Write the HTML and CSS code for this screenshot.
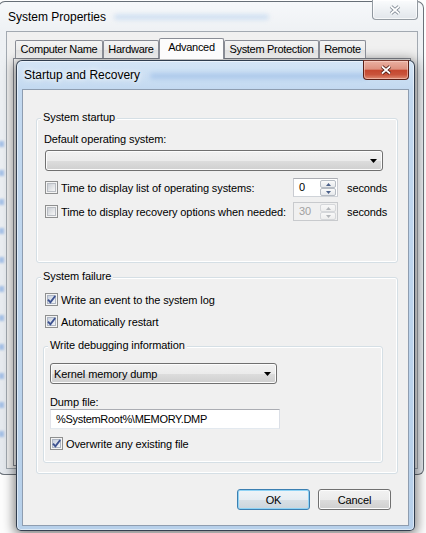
FILE: index.html
```html
<!DOCTYPE html>
<html lang="en">
<head>
<meta charset="utf-8">
<title>Startup and Recovery</title>
<link rel="stylesheet" href="styles.css">
</head>
<body>
<div class="desktop">
  <div class="window bgwin">
    <div class="frame-blur"></div>
    <div class="bg-titlebar">
      <span class="ghost ghost-bg"></span>
      <span class="wintitle">System Properties</span>
    </div>
    <div class="closebtn inactive">
      <svg width="12" height="10" viewBox="0 0 12 10"><path class="xo" d="M2 1.5L10 8.5M10 1.5L2 8.5"/><path class="xi" d="M2 1.5L10 8.5M10 1.5L2 8.5"/></svg>
    </div>
    <div class="bg-client">
      <div class="tabs">
        <div class="tab t-cn">Computer Name</div>
        <div class="tab t-hw">Hardware</div>
        <div class="tab t-adv sel">Advanced</div>
        <div class="tab t-sp">System Protection</div>
        <div class="tab t-rm">Remote</div>
      </div>
      <div class="tabpanel"></div>
    </div>
  </div>

  <div class="window dlg">
    <div class="dlg-titlebar">
      <span class="ghost ghost-dlg"></span>
      <span class="wintitle glow">Startup and Recovery</span>
    </div>
    <div class="closebtn active">
      <svg width="12" height="10" viewBox="0 0 12 10"><path class="xo" d="M2 1.5L10 8.5M10 1.5L2 8.5"/><path class="xi" d="M2 1.5L10 8.5M10 1.5L2 8.5"/></svg>
    </div>
    <div class="dlg-client">
      <section class="group g1">
        <div class="glabel">System startup</div>
        <div class="label">Default operating system:</div>
        <div class="combo wide">
          <span class="combo-text"></span>
          <svg class="arr" width="7" height="4" viewBox="0 0 7 4"><path d="M0 0H7L3.5 4Z"/></svg>
        </div>
        <div class="srow r1">
          <span class="chk"><span class="chk-in"></span></span>
          <span class="rtext">Time to display list of operating systems:</span>
          <div class="spin">
            <span class="spin-val">0</span>
            <div class="spin-btns">
              <span class="sb"><svg width="5" height="3" viewBox="0 0 5 3"><path d="M0 3L2.5 0L5 3Z"/></svg></span>
              <span class="sb"><svg width="5" height="3" viewBox="0 0 5 3"><path d="M0 0L2.5 3L5 0Z"/></svg></span>
            </div>
          </div>
          <span class="unit">seconds</span>
        </div>
        <div class="srow r2">
          <span class="chk"><span class="chk-in"></span></span>
          <span class="rtext">Time to display recovery options when needed:</span>
          <div class="spin disabled">
            <span class="spin-val">30</span>
            <div class="spin-btns">
              <span class="sb"><svg width="5" height="3" viewBox="0 0 5 3"><path d="M0 3L2.5 0L5 3Z"/></svg></span>
              <span class="sb"><svg width="5" height="3" viewBox="0 0 5 3"><path d="M0 0L2.5 3L5 0Z"/></svg></span>
            </div>
          </div>
          <span class="unit">seconds</span>
        </div>
      </section>

      <section class="group g2">
        <div class="glabel">System failure</div>
        <div class="crow c1">
          <span class="chk on"><span class="chk-in"></span><svg class="tick" width="13" height="13" viewBox="0 0 13 13"><path d="M3 6.6L5.4 9.3L10.2 3"/></svg></span>
          <span>Write an event to the system log</span>
        </div>
        <div class="crow c2">
          <span class="chk on"><span class="chk-in"></span><svg class="tick" width="13" height="13" viewBox="0 0 13 13"><path d="M3 6.6L5.4 9.3L10.2 3"/></svg></span>
          <span>Automatically restart</span>
        </div>

        <section class="group g3">
          <div class="glabel">Write debugging information</div>
          <div class="combo kcombo">
            <span class="combo-text">Kernel memory dump</span>
            <svg class="arr" width="7" height="4" viewBox="0 0 7 4"><path d="M0 0H7L3.5 4Z"/></svg>
          </div>
          <div class="dumplabel">Dump file:</div>
          <div class="textbox">%SystemRoot%\MEMORY.DMP</div>
          <div class="crow c3">
            <span class="chk on"><span class="chk-in"></span><svg class="tick" width="13" height="13" viewBox="0 0 13 13"><path d="M3 6.6L5.4 9.3L10.2 3"/></svg></span>
            <span>Overwrite any existing file</span>
          </div>
        </section>
      </section>

      <div class="buttons">
        <button class="btn ok" type="button">OK</button>
        <button class="btn" type="button">Cancel</button>
      </div>
    </div>
  </div>
</div>
</body>
</html>
```

FILE: styles.css
```css
* { box-sizing: border-box; }
html, body { margin: 0; padding: 0; }
body {
  width: 426px;
  height: 533px;
  overflow: hidden;
  background: #fff;
  font-family: "Liberation Sans", Arial, sans-serif;
  font-size: 11px;
  letter-spacing: -0.1px;
  color: #000;
}
.desktop {
  position: relative;
  width: 426px;
  height: 533px;
  overflow: hidden;
  background: #fdfdfd;
}
.window {
  position: absolute;
  display: flex;
  flex-direction: column;
}

/* ---------- background window ---------- */
.bgwin {
  left: -2px;
  top: 1px;
  width: 426px;
  height: 474px;
  padding: 0 5px 5px 7px;
  border: 1px solid rgba(50, 58, 68, 0.7);
  border-radius: 7px 7px 6px 6px;
  background: linear-gradient(#f6f8fa, #eef1f4 30px, #e5e9ee);
}
.frame-blur {
  position: absolute;
  left: 0;
  top: 122px;
  width: 5px;
  height: 330px;
  background: repeating-linear-gradient(to bottom, transparent 0 17px, rgba(100, 150, 220, 0.5) 17px 23px, transparent 23px 29px);
  filter: blur(1.2px);
}
.bg-titlebar {
  position: relative;
  height: 29px;
  display: flex;
  align-items: center;
  padding-left: 2px;
}
.wintitle {
  position: relative;
  font-size: 12px;
  line-height: 16px;
  letter-spacing: 0;
  color: #000;
}
.glow {
  text-shadow: 0 0 5px #fff, 0 0 9px rgba(255, 255, 255, 0.9);
}
.ghost {
  position: absolute;
  height: 6px;
  border-radius: 3px;
  filter: blur(2.2px);
}
.ghost-bg {
  left: 108px;
  top: 12px;
  width: 155px;
  background: rgba(120, 170, 230, 0.25);
}
.ghost-dlg {
  left: 128px;
  top: 12px;
  width: 218px;
  background: rgba(100, 150, 220, 0.28);
}
.closebtn {
  position: absolute;
  width: 46px;
  height: 20px;
  display: flex;
  align-items: center;
  justify-content: center;
  border-radius: 0 0 4px 4px;
}
.closebtn svg { fill: none; stroke-linecap: butt; }
.closebtn .xo { stroke-width: 3.6; }
.closebtn .xi { stroke: #fff; stroke-width: 1.7; }
.closebtn.inactive {
  right: 5px;
  top: -2px;
  border: 1px solid rgba(70, 80, 92, 0.55);
  border-top: none;
  background: linear-gradient(#fbfcfd, #eef1f4 50%, #e2e6eb);
  box-shadow: inset 0 0 0 1px rgba(255, 255, 255, 0.7);
}
.closebtn.inactive .xo { stroke: #7d8691; }
.closebtn.active {
  right: 5px;
  top: -1px;
  border: 1px solid #5a1f16;
  border-top-color: #7a3a30;
  background: linear-gradient(#eab0a2 0%, #de917f 45%, #c5472f 52%, #c9533b 75%, #de8a72 100%);
  box-shadow: inset 0 0 0 1px rgba(255, 220, 210, 0.5);
}
.closebtn.active .xo { stroke: #4a1810; }

.bg-client {
  flex: 1;
  display: flex;
  flex-direction: column;
  border: 1px solid #a2a9b1;
  background: #f0f0f0;
  padding: 6px 6px 2px 6px;
}
.tabs {
  position: relative;
  z-index: 1;
  display: flex;
  align-items: flex-end;
  height: 20px;
  padding-left: 2px;
}
.tab {
  flex: none;
  height: 18px;
  border: 1px solid #898c95;
  border-bottom: none;
  border-radius: 2px 2px 0 0;
  background: linear-gradient(#f4f4f4, #ececec 50%, #e0e0e0 51%, #e8e8e8);
  text-align: center;
  line-height: 17px;
  white-space: nowrap;
  letter-spacing: -0.3px;
}
.t-cn { width: 88px; }
.t-hw { width: 56px; }
.t-adv { width: 65px; }
.t-sp { width: 95px; }
.t-rm { width: 47px; }
.tab.sel {
  height: 21px;
  margin-bottom: -1px;
  background: #fcfcfc;
}
.tabpanel {
  flex: 1;
  border: 1px solid #898c95;
  background: #fcfcfc;
}

/* ---------- dialog ---------- */
.dlg {
  left: 16px;
  top: 60px;
  width: 399px;
  height: 471px;
  padding: 0 5px 4px 5px;
  border: 1px solid rgba(25, 35, 50, 0.85);
  border-radius: 6px 6px 5px 5px;
  background: linear-gradient(to bottom, #d4e5f6 0, #c3d9f0 28px, #b7d0ea 100%);
  box-shadow: inset 0 0 0 1px rgba(255, 255, 255, 0.5), 0 2px 12px 2px rgba(0, 0, 0, 0.5);
}
.dlg-titlebar {
  position: relative;
  height: 28px;
  display: flex;
  align-items: center;
  padding-left: 2px;
}
.dlg-client {
  flex: 1;
  display: flex;
  flex-direction: column;
  border: 1px solid #8e9db0;
  background: #f0f0f0;
  padding: 28px 10px 0 13px;
}

.group {
  display: flex;
  flex-direction: column;
  border: 1px solid #d5dfe5;
  border-radius: 3px;
  box-shadow: inset 0 0 0 1px #fff;
}
.glabel {
  position: relative;
  align-self: flex-start;
  margin: -9px 0 0 -4px;
  padding: 0 2px;
  background: #f0f0f0;
  line-height: 15px;
}
.g1 { padding: 0 14px 41px 8px; }
.label {
  margin: 7px 0 0 -1px;
  line-height: 15px;
}
.combo {
  display: flex;
  align-items: center;
  justify-content: space-between;
  height: 21px;
  border: 1px solid #707070;
  border-radius: 3px;
  background: linear-gradient(#f2f2f2 0%, #ebebeb 50%, #dddddd 51%, #cfcfcf 100%);
  box-shadow: inset 0 0 0 1px #fcfcfc;
  padding: 0 5px 0 3px;
}
.combo .arr { fill: #000; flex: none; }
.wide { margin-top: 3px; }

.srow {
  display: flex;
  align-items: center;
  height: 19px;
}
.r1 { margin-top: 7px; }
.r2 { margin-top: 5px; }
.rtext {
  flex: none;
  width: 232px;
  white-space: nowrap;
}
.unit {
  flex: none;
  margin-left: 9px;
  white-space: nowrap;
}

.chk {
  position: relative;
  flex: none;
  display: flex;
  width: 13px;
  height: 13px;
  margin-right: 3px;
  padding: 1px;
  border: 1px solid #8e8f8f;
  background: #f4f4f4;
}
.chk-in {
  flex: 1;
  border: 1px solid #b9bdc3;
  background: linear-gradient(135deg, #cbcfd5, #f6f6f6);
}
.chk.on .chk-in {
  border-color: #aeb6c4;
  background: linear-gradient(135deg, #c9d1df, #f3f5f8);
}
.tick {
  position: absolute;
  left: -1px;
  top: -1px;
  fill: none;
  stroke: #3d5290;
  stroke-width: 1.9;
}

.spin {
  flex: none;
  display: flex;
  align-items: stretch;
  width: 45px;
  height: 19px;
  border: 1px solid #abadb3;
  border-color: #abadb3 #c9cbd1 #cfd3d8 #c9cbd1;
  background: #fff;
}
.spin-val {
  flex: 1;
  padding-left: 5px;
  line-height: 17px;
}
.spin-btns {
  display: flex;
  flex-direction: column;
  width: 16px;
  margin: 1px 1px 0 0;
}
.sb {
  display: flex;
  align-items: center;
  justify-content: center;
  height: 8px;
  border: 1px solid #b6bcc4;
  border-radius: 2px;
  background: linear-gradient(#fbfbfb, #e6e8eb);
}
.sb svg { fill: #4b6089; }
.spin.disabled {
  background: #f0f0f0;
  border-color: #c8cacd;
}
.spin.disabled .spin-val { color: #a0a0a0; }
.spin.disabled .sb { border-color: #d5d7da; background: linear-gradient(#f8f8f8, #eeeeee); }
.spin.disabled .sb svg { fill: #b3b6ba; }

.g2 {
  margin-top: 14px;
  padding: 0 14px 10px 8px;
}
.crow {
  display: flex;
  align-items: center;
  height: 15px;
  white-space: nowrap;
}
.c1 { margin-top: 8px; }
.c2 { margin-top: 7px; }
.g3 {
  margin: 17px 0 0 -2px;
  padding: 0 0 11px 6px;
}
.g3 .glabel { margin-left: -2px; }
.kcombo {
  width: 227px;
  margin-top: 10px;
}
.dumplabel {
  margin-top: 11px;
  line-height: 14px;
}
.textbox {
  width: 230px;
  height: 20px;
  border: 1px solid;
  border-color: #abadb3 #dbdfe6 #e3e9ef #e2e3ea;
  background: #fff;
  padding-left: 5px;
  line-height: 18px;
  white-space: nowrap;
  letter-spacing: -0.3px;
}
.c3 { margin-top: 7px; }

.buttons {
  display: flex;
  justify-content: flex-end;
  gap: 8px;
  margin: 15px 7px 0 0;
}
.btn {
  width: 73px;
  height: 21px;
  padding: 0;
  border: 1px solid #707070;
  border-radius: 3px;
  background: linear-gradient(#f2f2f2 0%, #ebebeb 50%, #dddddd 51%, #cfcfcf 100%);
  box-shadow: inset 0 0 0 1px #fcfcfc;
  font-family: "Liberation Sans", Arial, sans-serif;
  font-size: 11px;
  letter-spacing: -0.1px;
  color: #000;
}
.btn.ok {
  border-color: #3c7fb1;
  background: linear-gradient(#eef4f8 0%, #e6edf2 50%, #d8e0e6 51%, #cbd5dc 100%);
  box-shadow: inset 0 0 0 1px #8fd3f5;
}
```
